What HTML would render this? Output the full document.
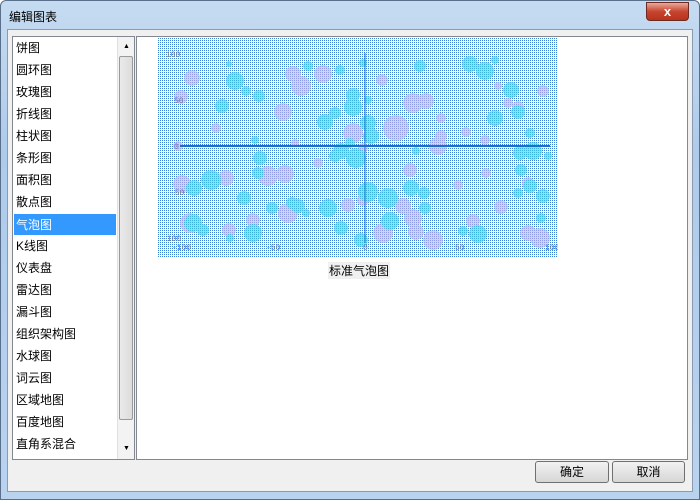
<!DOCTYPE html>
<html><head><meta charset="utf-8"><style>
*{margin:0;padding:0;box-sizing:border-box}
body{width:700px;height:500px;overflow:hidden;font-family:"Liberation Sans","Noto Sans CJK SC",sans-serif;font-size:12px;background:#fff}
.win{position:absolute;left:0;top:0;width:700px;height:500px;background:linear-gradient(180deg,#c5dbf1 0%,#aecbec 30%,#b9d3ef 100%);border:1px solid #5a6f8a;border-radius:6px 6px 0 0}
.title{position:absolute;left:8px;top:7px;font-size:12px;color:#000}
.close{position:absolute;left:645px;top:1px;width:43px;height:19px;border:1px solid #6b2a22;border-radius:0 0 4px 4px;background:linear-gradient(#e9a99a,#c8452f 50%,#b8321c);color:#fff;font-weight:bold;text-align:center;line-height:17px;font-size:13px}
.client{position:absolute;left:7px;top:29px;width:686px;height:463px;background:#f0f0f0;border:1px solid #8a9bb0}
.list{position:absolute;left:12px;top:36px;width:123px;height:424px;background:#fff;border:1px solid #828790}
.item{position:absolute;left:3px;width:100px;height:22px;line-height:22px;font-size:12px;color:#000}
.sel{background:#3399ff;color:#fff;left:1px;padding-left:2px}
.sb{position:absolute;left:104px;top:0;width:17px;height:422px;background:#f3f3f3;border-left:1px solid #e0e0e0}
.thumb{position:absolute;left:1px;top:19px;width:14px;height:364px;background:linear-gradient(90deg,#eaeaea,#dcdcdc);border:1px solid #9a9a9a;border-radius:2px}
.panel{position:absolute;left:136px;top:36px;width:552px;height:424px;background:#fff;border:1px solid #828790}
.btn{position:absolute;top:461px;width:74px;height:22px;border:1px solid #707070;border-radius:3px;background:linear-gradient(#f2f2f2,#e4e4e4 50%,#d6d6d6);text-align:center;line-height:20px;font-size:12px}
</style></head><body>
<div class="win">
<div class="title">编辑图表</div>
<div class="close">x</div>
</div>
<div class="client"></div>
<div class="list">
<div class="item" style="top:0">饼图</div>
<div class="item" style="top:22px">圆环图</div>
<div class="item" style="top:44px">玫瑰图</div>
<div class="item" style="top:66px">折线图</div>
<div class="item" style="top:88px">柱状图</div>
<div class="item" style="top:110px">条形图</div>
<div class="item" style="top:132px">面积图</div>
<div class="item" style="top:154px">散点图</div>
<div class="item sel" style="top:177px;height:21px;width:102px">气泡图</div>
<div class="item" style="top:198px">K线图</div>
<div class="item" style="top:220px">仪表盘</div>
<div class="item" style="top:242px">雷达图</div>
<div class="item" style="top:264px">漏斗图</div>
<div class="item" style="top:286px">组织架构图</div>
<div class="item" style="top:308px">水球图</div>
<div class="item" style="top:330px">词云图</div>
<div class="item" style="top:352px">区域地图</div>
<div class="item" style="top:374px">百度地图</div>
<div class="item" style="top:396px">直角系混合</div>
<div class="sb"><div style="position:absolute;left:5px;top:6px;font-size:7px">▲</div><div class="thumb"></div><div style="position:absolute;left:5px;top:408px;font-size:7px">▼</div></div>
</div>
<div class="panel"></div>
<svg style="position:absolute;left:158px;top:38px" width="400" height="220">
<defs><pattern id="d" width="2" height="2" patternUnits="userSpaceOnUse"><rect width="2" height="2" fill="#fff"/><rect width="1" height="1" fill="#3a7fd8"/></pattern></defs>
<rect width="400" height="220" fill="url(#d)"/>
<g opacity="0.6">
<g fill="#c8aef0">
<circle cx="34" cy="40" r="8"/><circle cx="23" cy="59" r="7"/><circle cx="135" cy="36" r="8"/><circle cx="143" cy="48" r="10"/><circle cx="165" cy="36" r="9"/><circle cx="125" cy="74" r="9"/><circle cx="58" cy="90" r="5"/><circle cx="20" cy="108" r="5"/><circle cx="24" cy="146" r="9"/><circle cx="68" cy="140" r="8"/><circle cx="110" cy="138" r="10"/><circle cx="127" cy="136" r="9"/><circle cx="130" cy="175" r="10"/><circle cx="32" cy="185" r="10"/><circle cx="71" cy="192" r="7"/><circle cx="95" cy="182" r="7"/><circle cx="195" cy="95" r="10"/><circle cx="205" cy="110" r="5"/><circle cx="238" cy="90" r="13"/><circle cx="255" cy="65" r="10"/><circle cx="268" cy="63" r="8"/><circle cx="283" cy="98" r="6"/><circle cx="280" cy="108" r="9"/><circle cx="283" cy="80" r="5"/><circle cx="245" cy="168" r="8"/><circle cx="255" cy="180" r="9"/><circle cx="258" cy="194" r="8"/><circle cx="275" cy="202" r="10"/><circle cx="225" cy="195" r="10"/><circle cx="205" cy="162" r="6"/><circle cx="308" cy="94" r="5"/><circle cx="327" cy="102" r="5"/><circle cx="340" cy="48" r="4"/><circle cx="350" cy="65" r="5"/><circle cx="360" cy="69" r="6"/><circle cx="343" cy="169" r="7"/><circle cx="328" cy="135" r="5"/><circle cx="370" cy="195" r="8"/><circle cx="382" cy="200" r="10"/><circle cx="370" cy="145" r="6"/><circle cx="385" cy="53" r="6"/><circle cx="224" cy="42" r="6"/><circle cx="160" cy="125" r="5"/><circle cx="137" cy="105" r="4"/><circle cx="315" cy="183" r="7"/><circle cx="300" cy="147" r="5"/><circle cx="252" cy="132" r="7"/><circle cx="190" cy="167" r="7"/></g>
<g fill="#3cd4e0">
<circle cx="77" cy="43" r="9"/><circle cx="71" cy="26" r="3"/><circle cx="102" cy="120" r="7"/><circle cx="97" cy="102" r="4"/><circle cx="64" cy="68" r="7"/><circle cx="88" cy="53" r="5"/><circle cx="101" cy="58" r="6"/><circle cx="167" cy="84" r="8"/><circle cx="177" cy="75" r="6"/><circle cx="182" cy="32" r="5"/><circle cx="195" cy="57" r="7"/><circle cx="195" cy="69" r="9"/><circle cx="192" cy="105" r="5"/><circle cx="183" cy="113" r="8"/><circle cx="198" cy="120" r="10"/><circle cx="213" cy="98" r="8"/><circle cx="177" cy="118" r="6"/><circle cx="210" cy="154" r="10"/><circle cx="230" cy="160" r="10"/><circle cx="170" cy="170" r="9"/><circle cx="183" cy="190" r="7"/><circle cx="203" cy="202" r="7"/><circle cx="232" cy="183" r="9"/><circle cx="253" cy="150" r="8"/><circle cx="267" cy="170" r="6"/><circle cx="266" cy="155" r="6"/><circle cx="312" cy="26" r="8"/><circle cx="327" cy="33" r="9"/><circle cx="262" cy="28" r="6"/><circle cx="337" cy="22" r="4"/><circle cx="353" cy="52" r="8"/><circle cx="360" cy="74" r="7"/><circle cx="337" cy="80" r="8"/><circle cx="320" cy="196" r="9"/><circle cx="305" cy="193" r="5"/><circle cx="362" cy="115" r="7"/><circle cx="375" cy="113" r="9"/><circle cx="363" cy="132" r="6"/><circle cx="360" cy="155" r="5"/><circle cx="372" cy="148" r="7"/><circle cx="383" cy="180" r="5"/><circle cx="390" cy="118" r="4"/><circle cx="385" cy="158" r="7"/><circle cx="372" cy="95" r="5"/><circle cx="53" cy="142" r="10"/><circle cx="36" cy="150" r="8"/><circle cx="35" cy="185" r="9"/><circle cx="45" cy="192" r="6"/><circle cx="86" cy="160" r="7"/><circle cx="95" cy="195" r="9"/><circle cx="100" cy="135" r="6"/><circle cx="114" cy="170" r="6"/><circle cx="134" cy="165" r="6"/><circle cx="140" cy="168" r="7"/><circle cx="148" cy="175" r="4"/><circle cx="210" cy="62" r="4"/><circle cx="210" cy="85" r="8"/><circle cx="205" cy="25" r="4"/><circle cx="150" cy="28" r="5"/><circle cx="72" cy="200" r="4"/><circle cx="258" cy="113" r="4"/></g>
</g>
<line x1="207" y1="15" x2="207" y2="205" stroke="#1a6fc8" stroke-width="1"/>
<line x1="22" y1="108" x2="392" y2="108" stroke="#1a6fc8" stroke-width="2"/>
<g font-size="8" fill="#777" font-family="Liberation Mono,monospace">
<text x="8" y="19">100</text><text x="16" y="65">50</text><text x="16" y="111">0</text><text x="12" y="157">-50</text><text x="4" y="203">-100</text>
<text x="14" y="212">-100</text><text x="108" y="212">-50</text><text x="205" y="212">0</text><text x="297" y="212">50</text><text x="387" y="212">100</text>
</g>
</svg>
<div style="position:absolute;left:328px;top:262px;font-size:12px;background:#f0f0f0;padding:0 1px">标准气泡图</div>
<div class="btn" style="left:535px">确定</div>
<div class="btn" style="left:612px;width:73px">取消</div>
</body></html>
